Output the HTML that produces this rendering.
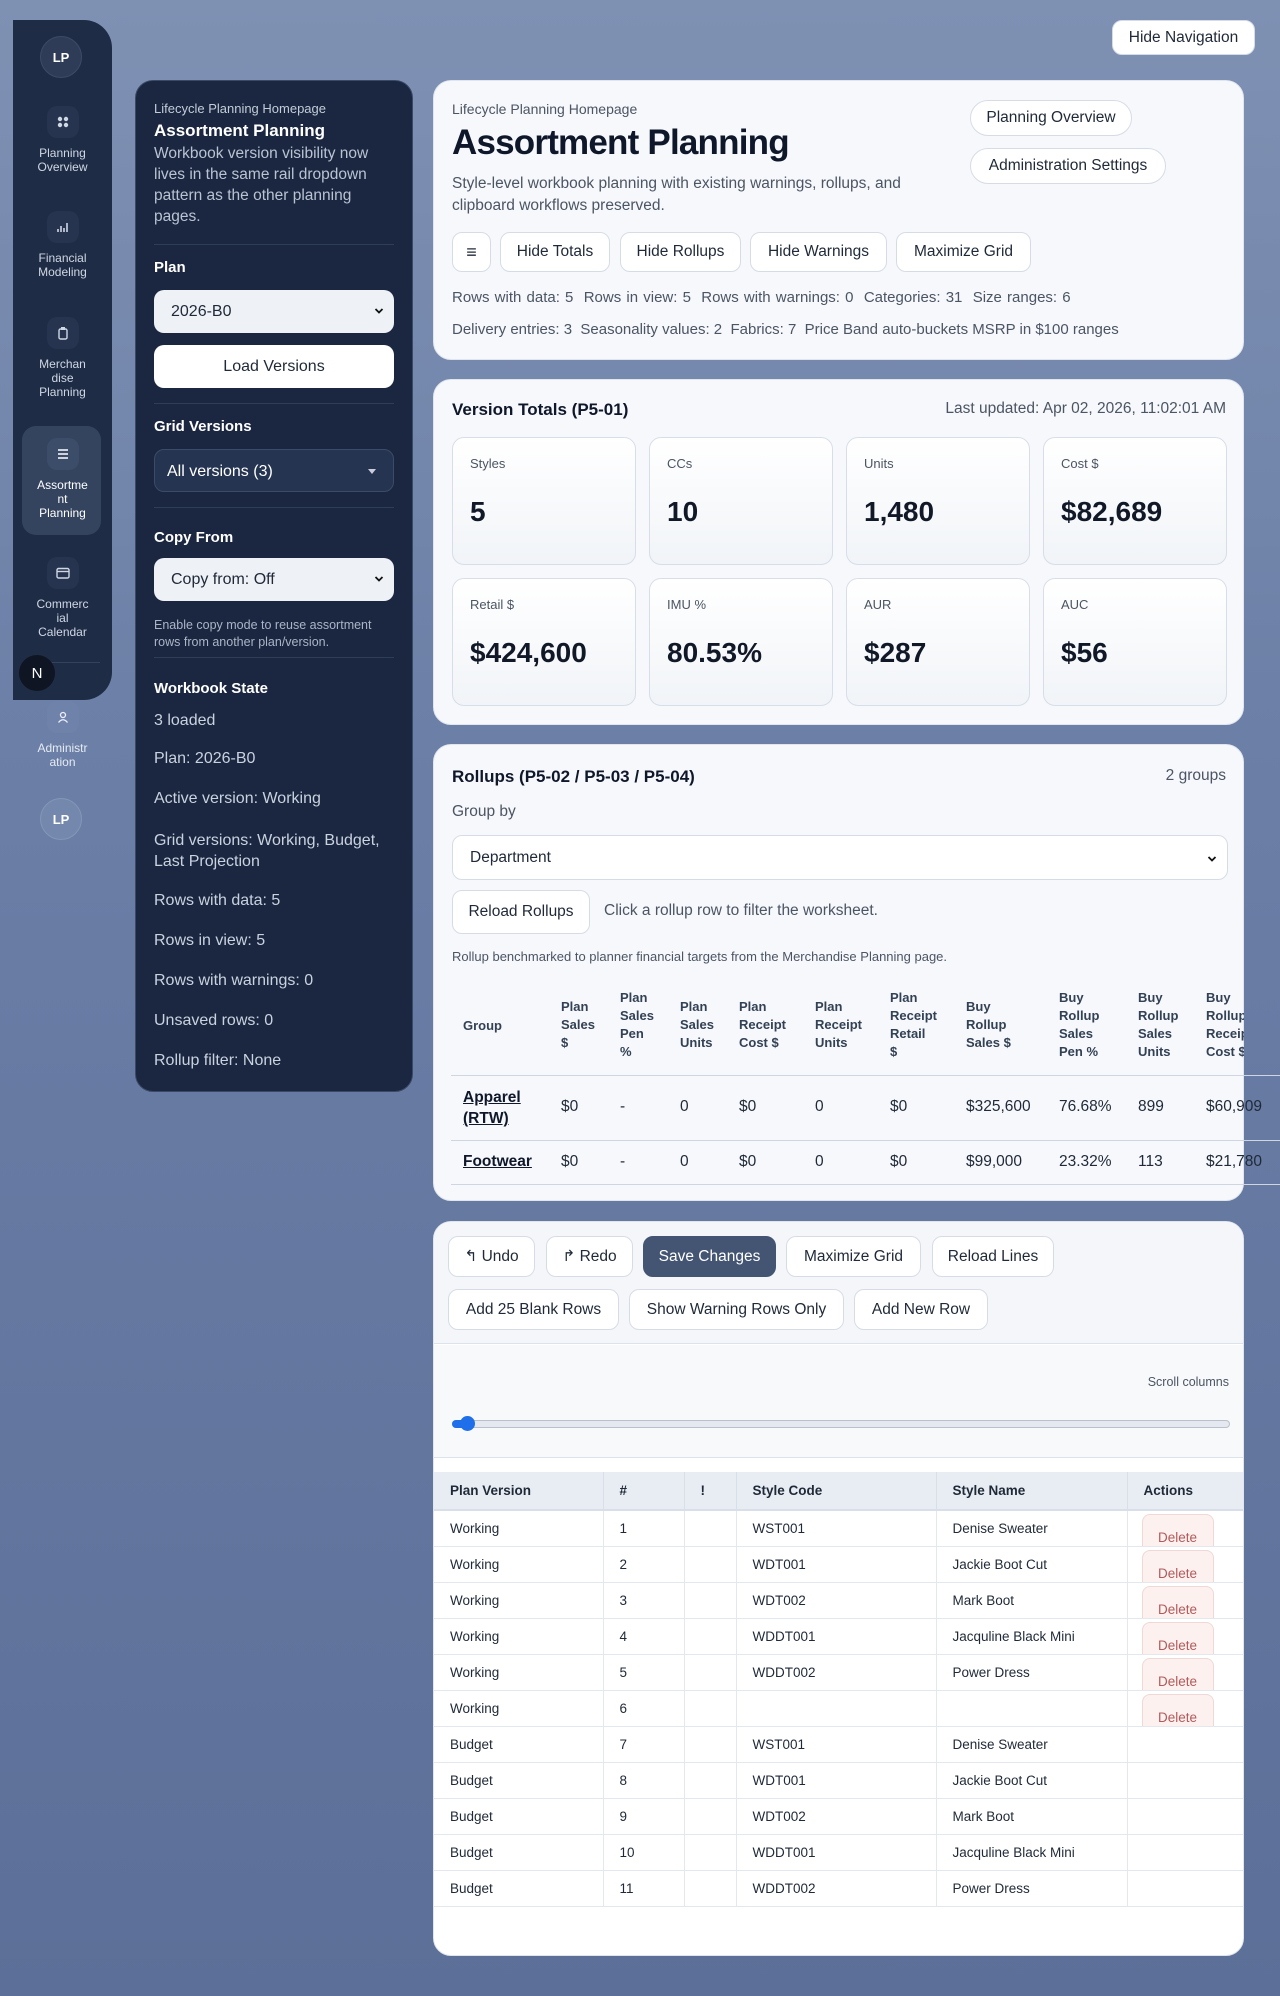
<!DOCTYPE html>
<html><head><meta charset="utf-8">
<style>
*{box-sizing:border-box;margin:0;padding:0}
body{width:1280px;height:1996px;overflow:hidden;font-family:"Liberation Sans",sans-serif;background:linear-gradient(180deg,#7f91b3 0%,#6a7ea6 40%,#5b6f98 100%);position:relative;color:#1f2937}
.abs{position:absolute}
.rail{left:13px;top:20px;width:99px;height:680px;background:#1f2c45;border-radius:0 28px 28px 0}
.av{width:42px;height:42px;border-radius:50%;background:#2e3c57;color:#fff;font-weight:bold;font-size:13px;display:flex;align-items:center;justify-content:center;border:1px solid #3c4b68}
.nav{width:99px;text-align:center;color:#cfd7e4;font-size:12px;line-height:14px}
.ico{width:32px;height:32px;border-radius:10px;background:#26344f;margin:0 auto 8px;display:flex;align-items:center;justify-content:center}
.side{left:135px;top:80px;width:278px;height:1012px;background:#1b2740;border-radius:18px;border:1px solid #3a4a66;color:#c9d2df;padding:0 18px}
.side .t{position:absolute;left:18px}
.sel{position:absolute;left:18px;width:240px;height:43px;border-radius:10px;background:#eef1f6;color:#1f2937;font-size:16px;padding-left:17px;line-height:43px}
.chev{position:absolute;right:10px;top:17px}
.hr{position:absolute;left:18px;width:240px;height:1px;background:#2e3d58}
.h{color:#fff;font-weight:bold;font-size:15px}
.card{background:#f6f8fb;border-radius:18px;border:1px solid #e1e6ee;left:433px;width:811px}
.btn{position:absolute;background:#fff;border:1px solid #d6dce6;border-radius:10px;font-size:15.5px;color:#1f2937;display:flex;align-items:center;justify-content:center}
.tile{position:absolute;width:184px;height:128px;border:1px solid #d8dee8;border-radius:12px;background:linear-gradient(#fff,#f1f4f8)}
.tile .l{position:absolute;left:17px;top:18px;font-size:13px;color:#4b5563}
.tile .v{position:absolute;left:17px;top:58px;font-size:28px;font-weight:bold;color:#111827}
.rt{position:absolute;font-size:13px;font-weight:bold;color:#334155;line-height:18px;white-space:nowrap}
.rv{position:absolute;font-size:15.5px;color:#1f2937}
.g td{height:36px;border-bottom:1px solid #e3e8ef;border-right:1px solid #e3e8ef;font-size:13.5px;padding-left:16px;color:#1f2937;background:#fff}
.g th{height:38px;background:#e8edf3;font-size:13.5px;text-align:left;padding-left:16px;border-right:1px solid #d9dfe8;border-bottom:2px solid #d9dfe8}
.del{display:inline-block;width:72px;height:32px;background:#fdf1f0;border:1px solid #efd8d6;border-bottom:none;border-radius:8px 8px 0 0;color:#b25a5a;font-size:13.5px;text-align:center;padding-top:15px;vertical-align:bottom;margin-top:2px}
</style></head><body>

<div class="abs btn" style="left:1112px;top:20px;width:143px;height:35px;font-size:15.5px">Hide Navigation</div>

<div class="abs rail"></div>
<div class="abs av" style="left:40px;top:36px">LP</div>
<div class="abs nav" style="left:13px;top:106px"><div class="ico"><svg width="12" height="12"><circle cx="3" cy="3" r="2.2" fill="#cfd7e4"/><circle cx="9" cy="3" r="2.2" fill="#cfd7e4"/><circle cx="3" cy="9" r="2.2" fill="#cfd7e4"/><circle cx="9" cy="9" r="2.2" fill="#cfd7e4"/></svg></div>Planning<br>Overview</div>
<div class="abs nav" style="left:13px;top:211px"><div class="ico"><svg width="14" height="12"><path d="M2 11V8M5 11V5M8 11V7M11 11V2" stroke="#cfd7e4" stroke-width="1.6"/></svg></div>Financial<br>Modeling</div>
<div class="abs nav" style="left:13px;top:317px"><div class="ico"><svg width="12" height="14"><rect x="2" y="3" width="8" height="10" rx="1.5" fill="none" stroke="#cfd7e4" stroke-width="1.4"/><rect x="4" y="1" width="4" height="3" fill="#cfd7e4"/></svg></div>Merchan<br>dise<br>Planning</div>
<div class="abs" style="left:22px;top:426px;width:79px;height:109px;border-radius:14px;background:#34445f"></div>
<div class="abs nav" style="left:13px;top:438px;color:#fff"><div class="ico" style="background:#3c4d6a"><svg width="12" height="10"><path d="M1 1H11M1 5H11M1 9H11" stroke="#fff" stroke-width="1.5"/></svg></div>Assortme<br>nt<br>Planning</div>
<div class="abs nav" style="left:13px;top:557px"><div class="ico"><svg width="14" height="12"><rect x="1" y="1.5" width="12" height="9.5" rx="1.5" fill="none" stroke="#cfd7e4" stroke-width="1.4"/><path d="M1 4.5H13" stroke="#cfd7e4" stroke-width="1.4"/></svg></div>Commerc<br>ial<br>Calendar</div>
<div class="abs" style="left:30px;top:662px;width:70px;height:1px;background:#34425c"></div>
<div class="abs" style="left:19px;top:655px;width:36px;height:36px;border-radius:50%;background:#0f1522;color:#fff;font-size:15px;display:flex;align-items:center;justify-content:center">N</div>
<div class="abs nav" style="left:13px;top:701px;color:#e6ebf3"><div class="ico" style="background:#6f83aa"><svg width="12" height="12"><circle cx="6" cy="4" r="2.5" fill="none" stroke="#eef" stroke-width="1.3"/><path d="M1.5 11.5Q6 6 10.5 11.5" fill="none" stroke="#eef" stroke-width="1.3"/></svg></div>Administr<br>ation</div>
<div class="abs av" style="left:40px;top:798px;background:#7488ae;border-color:#8496b8">LP</div>

<div class="abs side">
<div class="t" style="top:20px;font-size:13px;color:#c3ccd9">Lifecycle Planning Homepage</div>
<div class="t h" style="top:40px;font-size:17px">Assortment Planning</div>
<div class="t" style="top:62px;font-size:15.5px;line-height:21px;width:245px;color:#b9c3d2">Workbook version visibility now lives in the same rail dropdown pattern as the other planning pages.</div>
<div class="hr" style="top:163px"></div>
<div class="t h" style="top:178px">Plan</div>
<div class="sel" style="top:209px">2026-B0<svg class="chev" width="10" height="8"><path d="M1.5 2L5 5.5L8.5 2" fill="none" stroke="#111" stroke-width="1.8"/></svg></div>
<div class="sel" style="top:264px;background:#fff;text-align:center;padding:0">Load Versions</div>
<div class="hr" style="top:322px"></div>
<div class="t h" style="top:337px">Grid Versions</div>
<div class="sel" style="top:368px;background:#253450;color:#fff;border:1px solid #3b4b68;padding-left:12px">All versions (3)</div>
<div class="abs" style="left:232px;top:388px;border:4px solid transparent;border-top:5px solid #ccd;width:0;height:0"></div>
<div class="hr" style="top:426px"></div>
<div class="t h" style="top:448px">Copy From</div>
<div class="sel" style="top:477px">Copy from: Off<svg class="chev" width="10" height="8"><path d="M1.5 2L5 5.5L8.5 2" fill="none" stroke="#111" stroke-width="1.8"/></svg></div>
<div class="t" style="top:536px;font-size:12.5px;line-height:17px;width:245px;color:#aab5c6">Enable copy mode to reuse assortment rows from another plan/version.</div>
<div class="hr" style="top:576px"></div>
<div class="t h" style="top:599px">Workbook State</div>
<div class="t" style="top:629px;font-size:16px;line-height:21px;width:245px">3 loaded</div>
<div class="t" style="top:669px;font-size:16px">Plan: 2026-B0</div>
<div class="t" style="top:709px;font-size:16px">Active version: Working</div>
<div class="t" style="top:749px;font-size:16px;line-height:21px;width:245px">Grid versions: Working, Budget, Last Projection</div>
<div class="t" style="top:811px;font-size:16px">Rows with data: 5</div>
<div class="t" style="top:851px;font-size:16px">Rows in view: 5</div>
<div class="t" style="top:891px;font-size:16px">Rows with warnings: 0</div>
<div class="t" style="top:931px;font-size:16px">Unsaved rows: 0</div>
<div class="t" style="top:971px;font-size:16px">Rollup filter: None</div>
</div>

<!-- card 1 -->
<div class="abs card" style="top:80px;height:280px">
<div class="abs" style="left:18px;top:20px;font-size:14px;color:#4b5563">Lifecycle Planning Homepage</div>
<div class="abs" style="left:18px;top:42px;font-size:35px;font-weight:bold;color:#0f172a;letter-spacing:-0.8px">Assortment Planning</div>
<div class="abs" style="left:18px;top:92px;font-size:15.5px;line-height:22px;color:#4b5563;width:500px">Style-level workbook planning with existing warnings, rollups, and clipboard workflows preserved.</div>
<div class="btn" style="left:18px;top:151px;width:39px;height:40px;font-size:18px">≡</div>
<div class="btn" style="left:66px;top:151px;width:110px;height:40px">Hide Totals</div>
<div class="btn" style="left:186px;top:151px;width:121px;height:40px">Hide Rollups</div>
<div class="btn" style="left:316px;top:151px;width:137px;height:40px">Hide Warnings</div>
<div class="btn" style="left:462px;top:151px;width:135px;height:40px">Maximize Grid</div>
<div class="abs" style="left:18px;top:208px;font-size:15px;color:#4b5563;word-spacing:1px">Rows with data: 5 &nbsp;Rows in view: 5 &nbsp;Rows with warnings: 0 &nbsp;Categories: 31 &nbsp;Size ranges: 6</div>
<div class="abs" style="left:18px;top:240px;font-size:15px;color:#4b5563">Delivery entries: 3 &nbsp;Seasonality values: 2 &nbsp;Fabrics: 7 &nbsp;Price Band auto-buckets MSRP in $100 ranges</div>
<div class="btn" style="left:536px;top:19px;width:162px;height:36px;border-radius:18px">Planning Overview</div>
<div class="btn" style="left:536px;top:67px;width:196px;height:36px;border-radius:18px">Administration Settings</div>
</div>

<!-- card 2 -->
<div class="abs card" style="top:379px;height:346px">
<div class="abs" style="left:18px;top:20px;font-size:17px;font-weight:bold;color:#0f172a">Version Totals (P5-01)</div>
<div class="abs" style="right:17px;top:20px;font-size:15.5px;color:#4b5563">Last updated: Apr 02, 2026, 11:02:01 AM</div>
<div class="tile" style="left:18px;top:57px"><div class="l">Styles</div><div class="v">5</div></div>
<div class="tile" style="left:215px;top:57px"><div class="l">CCs</div><div class="v">10</div></div>
<div class="tile" style="left:412px;top:57px"><div class="l">Units</div><div class="v">1,480</div></div>
<div class="tile" style="left:609px;top:57px"><div class="l">Cost $</div><div class="v">$82,689</div></div>
<div class="tile" style="left:18px;top:198px"><div class="l">Retail $</div><div class="v">$424,600</div></div>
<div class="tile" style="left:215px;top:198px"><div class="l">IMU %</div><div class="v">80.53%</div></div>
<div class="tile" style="left:412px;top:198px"><div class="l">AUR</div><div class="v">$287</div></div>
<div class="tile" style="left:609px;top:198px"><div class="l">AUC</div><div class="v">$56</div></div>
</div>

<!-- card 3 -->
<div class="abs card" style="top:744px;height:457px">
<div class="abs" style="left:18px;top:22px;font-size:17px;font-weight:bold;color:#0f172a">Rollups (P5-02 / P5-03 / P5-04)</div>
<div class="abs" style="right:17px;top:22px;font-size:15.5px;color:#4b5563">2 groups</div>
<div class="abs" style="left:18px;top:58px;font-size:15.5px;color:#4b5563">Group by</div>
<div class="abs" style="left:18px;top:90px;width:776px;height:45px;background:#fff;border:1px solid #d6dce6;border-radius:10px;font-size:15.5px;padding-left:17px;line-height:43px">Department<svg class="chev" style="top:19px" width="10" height="8"><path d="M1.5 2L5 5.5L8.5 2" fill="none" stroke="#111" stroke-width="1.8"/></svg></div>
<div class="btn" style="left:18px;top:145px;width:138px;height:44px">Reload Rollups</div>
<div class="abs" style="left:170px;top:157px;font-size:15.5px;color:#4b5563">Click a rollup row to filter the worksheet.</div>
<div class="abs" style="left:18px;top:204px;font-size:13px;color:#4b5563">Rollup benchmarked to planner financial targets from the Merchandise Planning page.</div>
</div>
<div class="abs" style="left:451px;top:1075px;width:829px;height:1px;background:#cfd6e1"></div>
<div class="abs" style="left:451px;top:1140px;width:829px;height:1px;background:#cfd6e1"></div>
<div class="abs" style="left:451px;top:1184px;width:829px;height:1px;background:#cfd6e1"></div>
<div class="rt" style="left:463px;top:1017px">Group</div>
<div class="rt" style="left:561px;top:998px">Plan<br>Sales<br>$</div>
<div class="rt" style="left:620px;top:989px">Plan<br>Sales<br>Pen<br>%</div>
<div class="rt" style="left:680px;top:998px">Plan<br>Sales<br>Units</div>
<div class="rt" style="left:739px;top:998px">Plan<br>Receipt<br>Cost $</div>
<div class="rt" style="left:815px;top:998px">Plan<br>Receipt<br>Units</div>
<div class="rt" style="left:890px;top:989px">Plan<br>Receipt<br>Retail<br>$</div>
<div class="rt" style="left:966px;top:998px">Buy<br>Rollup<br>Sales $</div>
<div class="rt" style="left:1059px;top:989px">Buy<br>Rollup<br>Sales<br>Pen %</div>
<div class="rt" style="left:1138px;top:989px">Buy<br>Rollup<br>Sales<br>Units</div>
<div class="rt" style="left:1206px;top:989px;width:38px;overflow:hidden">Buy<br>Rollup<br>Receipt<br>Cost $</div>
<div class="rv" style="left:463px;top:1087px;font-weight:bold;text-decoration:underline;line-height:21px;color:#0f172a">Apparel<br>(RTW)</div>
<div class="rv" style="left:561px;top:1098px">$0</div><div class="rv" style="left:620px;top:1098px">-</div><div class="rv" style="left:680px;top:1098px">0</div><div class="rv" style="left:739px;top:1098px">$0</div><div class="rv" style="left:815px;top:1098px">0</div><div class="rv" style="left:890px;top:1098px">$0</div><div class="rv" style="left:966px;top:1098px">$325,600</div><div class="rv" style="left:1059px;top:1098px">76.68%</div><div class="rv" style="left:1138px;top:1098px">899</div><div class="rv" style="left:1206px;top:1098px">$60,909</div>
<div class="rv" style="left:463px;top:1153px;font-weight:bold;text-decoration:underline;color:#0f172a">Footwear</div>
<div class="rv" style="left:561px;top:1153px">$0</div><div class="rv" style="left:620px;top:1153px">-</div><div class="rv" style="left:680px;top:1153px">0</div><div class="rv" style="left:739px;top:1153px">$0</div><div class="rv" style="left:815px;top:1153px">0</div><div class="rv" style="left:890px;top:1153px">$0</div><div class="rv" style="left:966px;top:1153px">$99,000</div><div class="rv" style="left:1059px;top:1153px">23.32%</div><div class="rv" style="left:1138px;top:1153px">113</div><div class="rv" style="left:1206px;top:1153px">$21,780</div>

<!-- card 4 -->
<div class="abs card" style="top:1221px;height:735px;overflow:hidden;background:#fff">
<div class="abs" style="left:0;top:0;width:811px;height:122px;background:#f4f6f9;border-bottom:1px solid #dde3eb"></div>
<div class="btn" style="left:14px;top:14px;width:87px;height:41px">↰ Undo</div>
<div class="btn" style="left:112px;top:14px;width:87px;height:41px">↱ Redo</div>
<div class="btn" style="left:209px;top:14px;width:133px;height:41px;background:#435572;color:#fff;border-color:#435572">Save Changes</div>
<div class="btn" style="left:352px;top:14px;width:135px;height:41px">Maximize Grid</div>
<div class="btn" style="left:498px;top:14px;width:122px;height:41px">Reload Lines</div>
<div class="btn" style="left:14px;top:67px;width:171px;height:41px">Add 25 Blank Rows</div>
<div class="btn" style="left:195px;top:67px;width:215px;height:41px">Show Warning Rows Only</div>
<div class="btn" style="left:420px;top:67px;width:134px;height:41px">Add New Row</div>
<div class="abs" style="left:0;top:123px;width:811px;height:113px;background:#f8f9fb;border-bottom:1px solid #dde3eb"></div>
<div class="abs" style="right:14px;top:153px;font-size:12.5px;color:#4b5563">Scroll columns</div>
<div class="abs" style="left:18px;top:198px;width:778px;height:8px;border-radius:4px;background:#e5e9ef;border:1px solid #b8c0cc"></div>
<div class="abs" style="left:18px;top:198px;width:18px;height:8px;border-radius:4px;background:#1f6feb"></div>
<div class="abs" style="left:26px;top:194px;width:15px;height:15px;border-radius:50%;background:#1f6feb"></div>
<table class="g abs" style="left:0;top:250px;width:811px;border-collapse:collapse">
<tr><th style="width:169px">Plan Version</th><th style="width:81px">#</th><th style="width:52px">!</th><th style="width:200px">Style Code</th><th style="width:191px">Style Name</th><th style="border-right:none">Actions</th></tr>
<tr><td>Working</td><td>1</td><td></td><td>WST001</td><td>Denise Sweater</td><td style="padding-left:14px;vertical-align:bottom"><span class="del">Delete</span></td></tr>
<tr><td>Working</td><td>2</td><td></td><td>WDT001</td><td>Jackie Boot Cut</td><td style="padding-left:14px;vertical-align:bottom"><span class="del">Delete</span></td></tr>
<tr><td>Working</td><td>3</td><td></td><td>WDT002</td><td>Mark Boot</td><td style="padding-left:14px;vertical-align:bottom"><span class="del">Delete</span></td></tr>
<tr><td>Working</td><td>4</td><td></td><td>WDDT001</td><td>Jacquline Black Mini</td><td style="padding-left:14px;vertical-align:bottom"><span class="del">Delete</span></td></tr>
<tr><td>Working</td><td>5</td><td></td><td>WDDT002</td><td>Power Dress</td><td style="padding-left:14px;vertical-align:bottom"><span class="del">Delete</span></td></tr>
<tr><td>Working</td><td>6</td><td></td><td></td><td></td><td style="padding-left:14px;vertical-align:bottom"><span class="del">Delete</span></td></tr>
<tr><td>Budget</td><td>7</td><td></td><td>WST001</td><td>Denise Sweater</td><td></td></tr>
<tr><td>Budget</td><td>8</td><td></td><td>WDT001</td><td>Jackie Boot Cut</td><td></td></tr>
<tr><td>Budget</td><td>9</td><td></td><td>WDT002</td><td>Mark Boot</td><td></td></tr>
<tr><td>Budget</td><td>10</td><td></td><td>WDDT001</td><td>Jacquline Black Mini</td><td></td></tr>
<tr><td>Budget</td><td>11</td><td></td><td>WDDT002</td><td>Power Dress</td><td></td></tr>
</table>
</div>
</body></html>
